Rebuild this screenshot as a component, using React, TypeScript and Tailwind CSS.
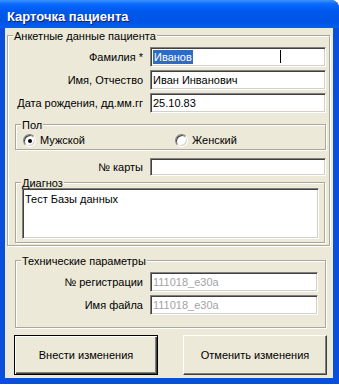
import type { ReactNode } from 'react';

const sunken =
  'border border-t-[#808080] border-l-[#808080] border-r-white border-b-white bg-white shadow-[inset_1px_1px_0_#404040,inset_-1px_-1px_0_#d4d0c8]';

function GroupBox({
  title,
  className = '',
  children,
}: {
  title: string;
  className?: string;
  children: ReactNode;
}) {
  return (
    <div
      className={`border border-[#aca899] shadow-[inset_1px_1px_0_#fff,1px_1px_0_#fff] ${className}`}
    >
      <div className="-mt-[5px] ml-[5px] w-fit bg-[#ece9d8] px-[1px] leading-[10px]">
        {title}
      </div>
      {children}
    </div>
  );
}

function Field({
  label,
  labelWidth,
  fieldWidth,
  height = 'h-[20px]',
  muted = false,
  children,
}: {
  label: string;
  labelWidth: string;
  fieldWidth: string;
  height?: string;
  muted?: boolean;
  children?: ReactNode;
}) {
  return (
    <div className="flex items-center gap-[7px]">
      <div className={`${labelWidth} text-right leading-[13px]`}>{label}</div>
      <div
        className={`${sunken} ${fieldWidth} ${height} relative flex items-center pl-[2px] ${
          muted ? 'text-[#a3a3a3]' : 'text-black'
        }`}
      >
        {children}
      </div>
    </div>
  );
}

function Radio({ checked = false }: { checked?: boolean }) {
  return (
    <span className="flex h-[13px] w-[13px] items-center justify-center rounded-full border border-t-[#808080] border-l-[#808080] border-r-white border-b-white bg-white shadow-[inset_1px_1px_0_#404040,inset_-1px_-1px_0_#d4d0c8]">
      {checked && <span className="h-[4px] w-[4px] rounded-full bg-black" />}
    </span>
  );
}

export default function App() {
  return (
    <div className="h-[384px] w-[339px] overflow-hidden rounded-tr-[8px] bg-[#0a4fdc] font-['Liberation_Sans',Arial,sans-serif] text-[11px] text-black">
      <div className="h-[28px] bg-[linear-gradient(180deg,#3d95ff_0%,#0a6aff_14%,#0058ee_40%,#0054e3_80%,#0060f0_100%)] pl-[7px] pt-[9px] text-[13px] font-bold leading-[16px] text-white [text-shadow:1px_1px_0_#0a1e8a]">
        Карточка пациента
      </div>

      <div className="ml-[5px] mr-[6px] bg-[#ece9d8] px-[2px] pb-[3px] pt-[7px]">
        <GroupBox title="Анкетные данные пациента" className="mr-[1px] pb-[2px]">
          <div className="mt-[6px] flex flex-col gap-[3px]">
            <Field label="Фамилия *" labelWidth="w-[135px]" fieldWidth="w-[176px]">
              <span className="bg-[#316ac5] px-[1px] leading-[14px] text-white">Иванов</span>
              <span className="absolute left-[129px] top-[2px] h-[13px] w-px bg-black" />
            </Field>
            <Field label="Имя, Отчество" labelWidth="w-[135px]" fieldWidth="w-[176px]">
              Иван Инванович
            </Field>
            <Field label="Дата рождения, дд.мм.гг" labelWidth="w-[135px]" fieldWidth="w-[176px]">
              25.10.83
            </Field>
          </div>

          <GroupBox title="Пол" className="ml-[7px] mr-[3px] mt-[11px] pb-[2px]">
            <div className="ml-[7px] mt-[4px] flex h-[13px] items-center">
              <div className="flex w-[152px] items-center gap-[4px]">
                <Radio checked />
                <span>Мужской</span>
              </div>
              <div className="flex items-center gap-[4px]">
                <Radio />
                <span>Женский</span>
              </div>
            </div>
          </GroupBox>

          <div className="mt-[8px]">
            <Field
              label="№ карты"
              labelWidth="w-[135px]"
              fieldWidth="w-[176px]"
              height="h-[18px]"
            />
          </div>

          <GroupBox title="Диагноз" className="ml-[7px] mr-[4px] mt-[6px] pb-[3px]">
            <div className={`${sunken} ml-[6px] mr-[5px] h-[51px] px-[2px] pt-[4px] leading-[13px]`}>
              Тест Базы данных
            </div>
          </GroupBox>
        </GroupBox>

        <GroupBox title="Технические параметры" className="ml-[8px] mr-[5px] mt-[14px] pb-[12px]">
          <div className="mt-[6px] flex flex-col gap-[3px]">
            <Field label="№ регистрации" labelWidth="w-[127px]" fieldWidth="w-[168px]" muted>
              111018_e30a
            </Field>
            <Field label="Имя файла" labelWidth="w-[127px]" fieldWidth="w-[168px]" muted>
              111018_e30a
            </Field>
          </div>
        </GroupBox>

        <div className="mt-[7px] flex justify-between pl-[7px] pr-[4px]">
          <button className="h-[40px] w-[144px] border border-black bg-[#ece9d8] shadow-[inset_1px_1px_0_#fff,inset_-1px_-1px_0_#404040,inset_-2px_-2px_0_#808080]">
            Внести изменения
          </button>
          <button className="h-[40px] w-[144px] border border-t-white border-l-white border-r-[#404040] border-b-[#404040] bg-[#ece9d8] shadow-[inset_-1px_-1px_0_#808080]">
            Отменить изменения
          </button>
        </div>
      </div>
    </div>
  );
}
